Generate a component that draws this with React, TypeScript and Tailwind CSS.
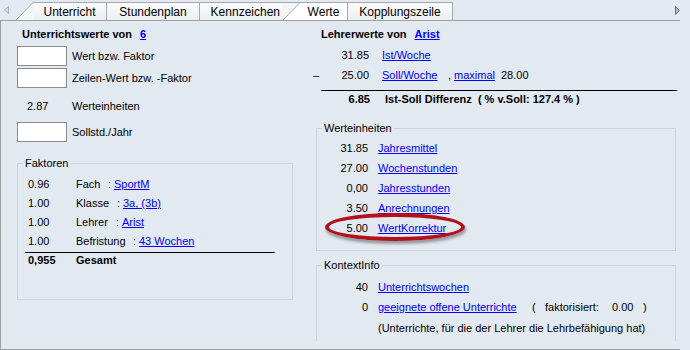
const link = "text-[#0000ff] underline underline-offset-[1px]";

const Tab: React.FC<{ width: string; active?: boolean; children: React.ReactNode }> = ({
  width,
  active,
  children,
}) => {
  return (
    <div
      className={`flex h-[18px] items-center justify-center border-t border-r border-[#a3a8ae] ${width} ${
        active ? "bg-white" : "bg-gradient-to-b from-[#fcfcfc] to-[#eceef1]"
      }`}
    >
      {children}
    </div>
  );
};

const GroupBox: React.FC<{ legend: string; className?: string; children: React.ReactNode }> = ({
  legend,
  className,
  children,
}) => {
  return (
    <fieldset className={`border border-[#cfd4da] ${className ?? ""}`}>
      <legend className="ml-[5px] px-[2px] leading-[13px]">{legend}</legend>
      {children}
    </fieldset>
  );
};

const InputRow: React.FC<{ label: string; className?: string }> = ({ label, className }) => {
  return (
    <div className={`flex items-center pl-[16px] ${className ?? ""}`}>
      <div className="h-[20px] w-[50px] border border-[#8c8c8c] bg-white" />
      <span className="ml-[5px]">{label}</span>
    </div>
  );
};

const FaktorRow: React.FC<{ value: string; label: string; labelWidth: string; target: string }> = ({
  value,
  label,
  labelWidth,
  target,
}) => {
  return (
    <div className="flex h-[19px] items-center">
      <span className="w-[58px] pl-[10px]">{value}</span>
      <span className={labelWidth}>{label}</span>
      <span className="w-[6px]">:</span>
      <a className={link}>{target}</a>
    </div>
  );
};

const WertRow: React.FC<{ value: string; target: string; children?: React.ReactNode }> = ({
  value,
  target,
  children,
}) => {
  return (
    <div className="relative flex h-[20px] items-center">
      <span className="w-[51px] text-right">{value}</span>
      <a className={`ml-[10px] ${link}`}>{target}</a>
      {children}
    </div>
  );
};

export default function App() {
  return (
    <div className="h-[350px] w-[690px] overflow-hidden bg-[#e3e9f1] font-['Liberation_Sans',Arial,sans-serif] text-[11px] text-black">
      {/* tab strip */}
      <div className="flex h-[20px] items-end text-[12px]">
        <div className="flex h-full w-[16px] items-center pl-[4px]">
          <svg width="5" height="8" viewBox="0 0 5 8">
            <path d="M4.5 0.5 L0.5 4 L4.5 7.5 Z" fill="#d8dbdf" stroke="#a9adb2" strokeWidth="1" />
          </svg>
        </div>
        <svg width="17" height="18" viewBox="0 0 17 18" className="block">
          <polygon points="0,18 17,0 17,18" fill="#f4f5f6" />
          <line x1="0" y1="18" x2="17" y2="0.5" stroke="#a3a8ae" strokeWidth="1" />
          <line x1="16.5" y1="0.5" x2="17" y2="0.5" stroke="#a3a8ae" strokeWidth="1" />
        </svg>
        <Tab width="w-[74px]">Unterricht</Tab>
        <Tab width="w-[93px]">Stundenplan</Tab>
        <div className="flex h-[18px] w-[83px] items-center justify-end border-t border-[#a3a8ae] bg-gradient-to-b from-[#fcfcfc] to-[#eceef1] pr-[3px]">
          Kennzeichen
        </div>
        <svg width="17" height="18" viewBox="0 0 17 18" className="block">
          <polygon points="0,0 17,0 0,18" fill="#f4f5f6" />
          <polygon points="0,18 17,0 17,18" fill="#ffffff" />
          <line x1="0" y1="0.5" x2="17" y2="0.5" stroke="#a3a8ae" strokeWidth="1" />
          <line x1="0" y1="18" x2="17" y2="0.5" stroke="#a3a8ae" strokeWidth="1" />
        </svg>
        <Tab width="w-[48px]" active>
          Werte
        </Tab>
        <Tab width="w-[105px]">Kopplungszeile</Tab>
        <div className="ml-auto flex h-full items-center pr-[10px]">
          <svg width="5" height="9" viewBox="0 0 5 9">
            <path d="M0.5 0.5 L4.5 4.5 L0.5 8.5 Z" fill="#b4b8bd" stroke="#6d7278" strokeWidth="1" />
          </svg>
        </div>
      </div>

      {/* panel */}
      <div className="flex h-[330px] w-[680px] border-t border-b border-l border-[#a0a0a0]">
        {/* left column */}
        <div className="flex w-[299px] flex-col">
          <div className="mt-[6px] flex h-[14px] items-center pl-[21px] font-bold">
            <span>Unterrichtswerte von</span>
            <a className={`ml-[8px] ${link}`}>6</a>
          </div>
          <InputRow label="Wert bzw. Faktor" className="mt-[5px]" />
          <InputRow label="Zeilen-Wert bzw. -Faktor" className="mt-[2px]" />
          <div className="mt-[8px] flex h-[20px] items-center pl-[16px]">
            <span className="w-[50px] pl-[10px]">2.87</span>
            <span className="ml-[5px]">Werteinheiten</span>
          </div>
          <InputRow label="Sollstd./Jahr" className="mt-[6px]" />

          <GroupBox legend="Faktoren" className="mt-[15px] ml-[16px] h-[143px] w-[276px]">
            <div className="pt-[5px]">
              <FaktorRow value="0.96" label="Fach" labelWidth="w-[32px]" target="SportM" />
              <FaktorRow value="1.00" label="Klasse" labelWidth="w-[41px]" target="3a, (3b)" />
              <FaktorRow value="1.00" label="Lehrer" labelWidth="w-[40px]" target="Arist" />
              <FaktorRow value="1.00" label="Befristung" labelWidth="w-[57px]" target="43 Wochen" />
              <div className="mt-[1px] ml-[7px] w-[250px] border-t border-black" />
              <div className="flex h-[15px] items-center font-bold">
                <span className="w-[58px] pl-[10px]">0,955</span>
                <span>Gesamt</span>
              </div>
            </div>
          </GroupBox>
        </div>

        {/* right column */}
        <div className="flex flex-1 flex-col">
          <div className="mt-[6px] flex h-[14px] items-center pl-[21px] font-bold">
            <span>Lehrerwerte von</span>
            <a className={`ml-[8px] ${link}`}>Arist</a>
          </div>
          <div className="mt-[4px] flex h-[20px] items-center">
            <span className="w-[21px]" />
            <span className="w-[48px] text-right">31.85</span>
            <a className={`ml-[13px] ${link}`}>Ist/Woche</a>
          </div>
          <div className="flex h-[20px] items-center">
            <span className="w-[21px] pl-[13px]">–</span>
            <span className="w-[48px] text-right">25.00</span>
            <span className="ml-[13px] inline-block w-[66px]">
              <a className={link}>Soll/Woche</a>
            </span>
            <span className="inline-block w-[6px]">,</span>
            <span className="inline-block w-[47px]">
              <a className={link}>maximal</a>
            </span>
            <span>28.00</span>
          </div>
          <div className="mt-[5px] ml-[21px] w-[356px] border-t border-black" />
          <div className="flex h-[16px] items-center font-bold">
            <span className="w-[21px]" />
            <span className="w-[49px] text-right">6.85</span>
            <span className="ml-[15px] whitespace-pre">Ist-Soll Differenz  ( % v.Soll: 127.4 % )</span>
          </div>

          <GroupBox legend="Werteinheiten" className="mt-[15px] ml-[16px] h-[129px] w-[360px]">
            <div className="pt-[3px]">
              <WertRow value="31.85" target="Jahresmittel" />
              <WertRow value="27.00" target="Wochenstunden" />
              <WertRow value="0,00" target="Jahresstunden" />
              <WertRow value="3.50" target="Anrechnungen" />
              <WertRow value="5.00" target="WertKorrektur">
                <div className="absolute top-[-5px] left-[8px] h-[28px] w-[140px] rounded-[50%] border-[4px] border-[#b3121b] shadow-[1px_3px_3px_rgba(0,0,0,0.35)]" />
              </WertRow>
            </div>
          </GroupBox>

          <GroupBox legend="KontextInfo" className="mt-[8px] ml-[16px] h-[82px] w-[360px] border-b-0">
            <div className="pt-[5px]">
              <WertRow value="40" target="Unterrichtswochen" />
              <div className="flex h-[20px] items-center">
                <span className="w-[51px] text-right">0</span>
                <span className="ml-[10px] inline-block w-[154px]">
                  <a className={link}>geeignete offene Unterrichte</a>
                </span>
                <span className="inline-block w-[13px]">(</span>
                <span className="inline-block w-[67px]">faktorisiert:</span>
                <span className="inline-block w-[31px]">0.00</span>
                <span>)</span>
              </div>
              <div className="mt-[1px] flex h-[20px] items-center pl-[61px]">
                (Unterrichte, für die der Lehrer die Lehrbefähigung hat)
              </div>
            </div>
          </GroupBox>
        </div>
      </div>
    </div>
  );
}
